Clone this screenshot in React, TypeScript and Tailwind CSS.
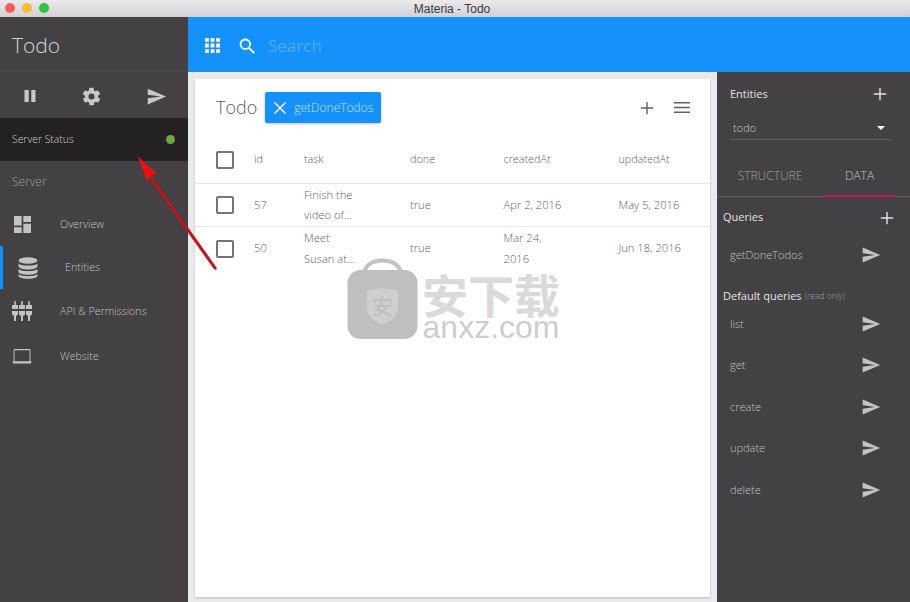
import React from "react";

const Send = ({ className = "" }: { className?: string }) => (
  <svg viewBox="0 0 24 24" className={className} fill="currentColor">
    <path d="M2 3 L23 12 L2 21 L2 14 L17 12 L2 10 Z" />
  </svg>
);

const Plus = ({ className = "" }: { className?: string }) => (
  <svg viewBox="0 0 16 16" className={className} fill="none" stroke="currentColor" strokeWidth="1.6">
    <path d="M8 1V15M1 8H15" />
  </svg>
);

const Box = () => <div className="h-[18px] w-[18px] rounded-[2px] border-2 border-[#757575]" />;

const NavItem = ({ icon, label, h, active }: { icon: React.ReactNode; label: string; h: string; active?: boolean }) => (
  <div className={`flex items-center ${h} ${active ? "border-l-[3px] border-[#1591fc]" : ""}`}>
    <div className={active ? "flex w-[50px] justify-center" : "flex w-[44px] justify-center"}>{icon}</div>
    <span className={`text-[10.7px] font-light text-[#c4c3c4] ${active ? "pl-[12px]" : "pl-[16px]"}`}>{label}</span>
  </div>
);

const Query = ({ label, h }: { label: string; h: string }) => (
  <div className={`flex items-center justify-between pl-[13px] pr-[26px] ${h}`}>
    <span className="text-[11px] font-light text-[#c4c3c4]">{label}</span>
    <Send className="mr-[3px] h-[20px] w-[20px] text-[#c4c3c4]" />
  </div>
);

export default function App() {
  return (
    <div className="relative flex h-[602px] w-[910px] flex-col overflow-hidden bg-[#e8eaed] font-['Open_Sans','Noto_Sans',sans-serif]">
      {/* title bar */}
      <div className="relative flex h-[17px] shrink-0 items-center justify-center bg-gradient-to-b from-[#ebe9eb] to-[#d3d1d3] text-[12px] text-[#3c3c3c] font-['Liberation_Sans',sans-serif]">
        <div className="absolute left-[5px] top-[3px] flex gap-[7px]">
          <span className="h-[10px] w-[10px] rounded-full bg-[#fc5c56]" />
          <span className="h-[10px] w-[10px] rounded-full bg-[#fdbc2e]" />
          <span className="h-[10px] w-[10px] rounded-full bg-[#29c740]" />
        </div>
        <span className="pr-[6px]">Materia - Todo</span>
      </div>

      <div className="flex min-h-0 flex-1">
        {/* sidebar */}
        <aside className="flex w-[188px] shrink-0 flex-col bg-[#434143]">
          <div className="flex h-[55px] items-center border-b border-[#4d4b4d] pl-[12px] pt-[3px] text-[21px] font-light text-[#d6d5d6]">Todo</div>
          <div className="flex h-[46px] items-center justify-between pl-[23px] pr-[21px] pt-[2px] text-[#c9c8c9]">
            <svg viewBox="0 0 14 14" className="h-[14px] w-[14px]" fill="currentColor"><path d="M1.500 1h4.200v12H1.500zM8.300 1h4.200v12H8.300z" /></svg>
            <svg viewBox="0 0 24 24" className="h-[21px] w-[21px]" fill="currentColor"><path d="M19.4 13a7.5 7.5 0 0 0 0-2l2.1-1.6a.5.5 0 0 0 .1-.7l-2-3.4a.5.5 0 0 0-.6-.2l-2.5 1a7.4 7.4 0 0 0-1.7-1l-.4-2.7a.5.5 0 0 0-.5-.4h-4a.5.5 0 0 0-.5.4l-.4 2.7a7.4 7.4 0 0 0-1.7 1l-2.5-1a.5.5 0 0 0-.6.2l-2 3.4a.5.5 0 0 0 .1.7L4.6 11a7.5 7.5 0 0 0 0 2l-2.1 1.6a.5.5 0 0 0-.1.7l2 3.4c.1.2.4.3.6.2l2.5-1a7.4 7.4 0 0 0 1.7 1l.4 2.7c0 .2.3.4.5.4h4c.2 0 .5-.2.5-.4l.4-2.7a7.4 7.4 0 0 0 1.7-1l2.5 1c.2.1.5 0 .6-.2l2-3.4a.5.5 0 0 0-.1-.7zM12 15.5a3.5 3.5 0 1 1 0-7 3.5 3.5 0 0 1 0 7z" /></svg>
            <Send className="h-[21px] w-[21px]" />
          </div>
          <div className="flex h-[43px] items-center justify-between bg-[#232123] pl-[12px] pr-[13px] text-[10.4px] font-light text-[#d0cfd0]">
            <span>Server Status</span>
            <span className="h-[9px] w-[9px] rounded-full bg-[#71a83c]" />
          </div>
          <div className="flex h-[42px] items-center pl-[12px] text-[12px] font-light text-[#a09fa0]">Server</div>
          <div className="flex flex-col">
            <NavItem
              h="h-[43px]"
              label="Overview"
              icon={<svg viewBox="0 0 16 16" className="h-[17px] w-[17px] text-[#c4c3c4]" fill="currentColor"><path d="M0 0h7.2v9H0zM8.8 0H16v5.6H8.8zM0 10.6h7.2V16H0zM8.8 7.2H16V16H8.8z" /></svg>}
            />
            <NavItem
              h="h-[43px]"
              active
              label="Entities"
              icon={<svg viewBox="0 0 20 22" className="h-[22px] w-[20px] text-[#c4c3c4]" fill="currentColor"><ellipse cx="10" cy="3.5" rx="9.5" ry="3.3" /><path d="M.5 6v3.2C.5 11 4.8 12.4 10 12.4S19.5 11 19.5 9.2V6C19.5 7.8 15.2 8.6 10 8.6S.5 7.8.5 6z" /><path d="M.5 11.6v3.2c0 1.8 4.3 3 9.5 3s9.5-1.2 9.5-3v-3.2c0 1.8-4.3 2.6-9.5 2.6S.5 13.4.5 11.6z" /><path d="M.5 16.6v2.2c0 1.8 4.3 3 9.5 3s9.5-1.2 9.5-3v-2.2c0 1.8-4.3 2.6-9.5 2.6S.5 18.4.5 16.6z" /></svg>}
            />
            <NavItem
              h="h-[44px]"
              label="API & Permissions"
              icon={<svg viewBox="0 0 20 20" className="h-[20px] w-[20px] text-[#c4c3c4]" fill="currentColor"><path d="M2.2 0h1.6v4H6v4H0V4h2.2zM9.2 0h1.6v4H13v4H7V4h2.2zM16.2 0h1.6v4H20v4h-6V4h2.2zM0 10h6v3.5L4 15v5H2v-5L0 13.5zM7 10h6v3.5L11 15v5H9v-5l-2-1.5zM14 10h6v3.5L18 15v5h-2v-5l-2-1.5z" /></svg>}
            />
            <NavItem
              h="h-[46px]"
              label="Website"
              icon={<svg viewBox="0 0 20 16" className="h-[15px] w-[20px] text-[#c4c3c4]" fill="currentColor"><path fillRule="evenodd" d="M2 0h16a1 1 0 0 1 1 1v12h-1V1.2H2V13H1V1a1 1 0 0 1 1-1zM0 13h20v1a1.5 1.5 0 0 1-1.5 1.5h-17A1.5 1.5 0 0 1 0 14z" /></svg>}
            />
          </div>
        </aside>

        <div className="flex min-w-0 flex-1 flex-col">
          {/* blue bar */}
          <div className="flex h-[55px] shrink-0 items-center bg-[#1591fc] pl-[17px] pt-[2px]">
            <svg viewBox="0 0 15 15" className="h-[15px] w-[15px] text-white" fill="currentColor"><path d="M0 0h3.8v3.8H0zM5.6 0h3.8v3.8H5.6zM11.2 0H15v3.8h-3.8zM0 5.6h3.8v3.8H0zM5.6 5.6h3.8v3.8H5.6zM11.2 5.6H15v3.8h-3.8zM0 11.2h3.8V15H0zM5.6 11.2h3.8V15H5.6zM11.2 11.2H15V15h-3.8z" /></svg>
            <svg viewBox="0 0 16 16" className="ml-[19px] h-[16px] w-[16px] text-white" fill="none" stroke="currentColor" strokeWidth="1.8"><circle cx="6.3" cy="6.3" r="4.8" /><path d="M10 10L15.2 15.2" /></svg>
            <div className="ml-[12px] mt-[1px] flex h-[25px] flex-1 items-center border-b border-[#2b8fe6] pl-[1px] text-[17px] text-[#4fabfb]">Search</div>
          </div>

          <div className="flex min-h-0 flex-1">
            {/* content */}
            <main className="min-w-0 flex-1 pl-[7px] pr-[7px] pt-[7px] pb-[5px]">
              <div className="flex h-full flex-col bg-white shadow-[0_1px_2px_rgba(0,0,0,0.2)]">
                <div className="flex h-[57px] shrink-0 items-center pl-[21px] pr-[20px]">
                  <span className="text-[18px] font-light text-[#5a5a5a]">Todo</span>
                  <div className="ml-[8px] flex h-[31px] w-[116px] items-center rounded-[2px] bg-[#1591fc] pl-[9px] shadow-[0_1px_3px_rgba(0,0,0,0.25)]">
                    <svg viewBox="0 0 12 12" className="h-[12px] w-[12px] text-white" fill="none" stroke="currentColor" strokeWidth="1.5"><path d="M.5.5l11 11M11.5.5l-11 11" /></svg>
                    <span className="ml-[8px] text-[12px] font-light text-[#c4e3fd]">getDoneTodos</span>
                  </div>
                  <div className="ml-auto flex items-center gap-[20px] text-[#616161]">
                    <Plus className="h-[14px] w-[14px]" />
                    <svg viewBox="0 0 16 11" className="h-[11px] w-[16px]" fill="currentColor"><path d="M0 0h16v1.5H0zM0 4.75h16v1.5H0zM0 9.5h16V11H0z" /></svg>
                  </div>
                </div>
                <div className="grid grid-cols-[59px_50px_106px_93.5px_115px_1fr] font-light text-[#5f5f5f]">
                  <Row cells={["id", "task", "done", "createdAt", "updatedAt"]} h="h-[48px]" size="text-[10.8px]" />
                  <Row cells={["57", ["Finish the", "video of..."], "true", "Apr 2, 2016", "May 5, 2016"]} h="h-[43px]" size="text-[11.2px]" />
                  <Row cells={["50", ["Meet", "Susan at..."], "true", ["Mar 24,", "2016"], "Jun 18, 2016"]} h="h-[43px]" size="text-[11.2px]" last />
                </div>
              </div>
            </main>

            {/* right panel */}
            <aside className="flex w-[193px] shrink-0 flex-col bg-[#434143]">
              <div className="flex h-[43px] items-center justify-between pl-[13px] pr-[23px] pt-[1px]">
                <span className="text-[11px] text-[#e4e3e4]">Entities</span>
                <Plus className="h-[14px] w-[14px] text-[#e4e3e4]" />
              </div>
              <div className="ml-[14px] mr-[18px] mt-[2px] flex h-[23px] items-center justify-between border-b border-[#5e5c5e] pl-[2px] pr-[7px] text-[11px] font-light text-[#cfcecf]">
                <span>todo</span>
                <span className="h-0 w-0 border-x-[4px] border-t-[4px] border-x-transparent border-t-white" />
              </div>
              <div className="mt-[18px] flex h-[39px] border-b border-[#5e5c5e]">
                <div className="flex w-[107px] justify-center pt-[9px] pr-[1px] text-[12px] font-light text-[#a09fa0]">STRUCTURE</div>
                <div className="relative flex w-[71px] justify-center pt-[9px] text-[12px] font-light text-[#c4c3c4]">
                  DATA
                  <div className="absolute bottom-[-1px] left-0 right-0 h-[2px] bg-[#c2185b]" />
                </div>
              </div>
              <div className="flex h-[41px] items-center justify-between pl-[6px] pr-[16px]">
                <span className="text-[11px] text-[#e4e3e4]">Queries</span>
                <Plus className="h-[14px] w-[14px] text-[#e4e3e4]" />
              </div>
              <Query label="getDoneTodos" h="h-[34px]" />
              <div className="mt-[13px] flex h-[22px] items-center pl-[6px] text-[11px] text-[#e4e3e4]">
                Default queries<span className="ml-[3px] text-[8.5px] font-light text-[#a09fa0]">(read only)</span>
              </div>
              <div className="mt-[-4px] flex flex-col">
                <Query label="list" h="h-[41.5px]" />
                <Query label="get" h="h-[41.5px]" />
                <Query label="create" h="h-[41.5px]" />
                <Query label="update" h="h-[41.5px]" />
                <Query label="delete" h="h-[41.5px]" />
              </div>
            </aside>
          </div>
        </div>
      </div>

      {/* watermark */}
      <div className="pointer-events-none absolute left-[347px] top-[258px] flex items-start">
        <div className="relative h-[82px] w-[71px]">
          <svg viewBox="0 0 71 82" className="h-[82px] w-[71px]">
            <path d="M17 14C20 5 28 2.5 35.5 2.5S51 5 54 14" fill="none" stroke="#c4c4c4" strokeWidth="4" />
            <rect x="0.5" y="12" width="70" height="69" rx="13" fill="#bfbfbf" />
            <path d="M20 33q15-5 31 0v17q0 11-15.500 16q-15.500-5-15.500-16z" fill="#cfcfcf" />
          </svg>
          <span className="absolute left-[25px] top-[34px] text-[21px] leading-[26px] text-[#bcbcbc] font-['Noto_Sans_CJK_SC',sans-serif]">安</span>
        </div>
        <div className="ml-[4px] flex flex-col items-center pt-[15px]">
          <span className="text-[46px] font-bold leading-[40px] text-[#dadada] font-['Noto_Sans_CJK_SC',sans-serif]">安下载</span>
          <span className="mt-[1px] text-[32px] leading-[26px] text-[#cecece] font-['Liberation_Sans',sans-serif]">anxz.com</span>
        </div>
      </div>

      {/* annotation arrow */}
      <svg className="pointer-events-none absolute left-[130px] top-[150px]" width="100" height="125" viewBox="0 0 100 125">
        <path d="M85 118L21 28" stroke="rgba(0,0,0,0.25)" strokeWidth="3" strokeLinecap="round" transform="translate(1 1)" />
        <path d="M85 118L21 28" stroke="#cc1018" strokeWidth="3" strokeLinecap="round" />
        <path d="M7.500 6L27 24L20 26L17 31Z" fill="#f00d10" />
      </svg>
    </div>
  );
}

function Row({ cells, h, size, last }: { cells: (string | string[])[]; h: string; size: string; last?: boolean }) {
  const border = last ? "" : "border-b border-[#e6e6e6]";
  return (
    <>
      <div className={`flex items-center pl-[21px] ${h} ${border}`}><Box /></div>
      {cells.map((c, i) => (
        <div key={i} className={`flex flex-col justify-center ${size} ${h} ${border}`}>
          {Array.isArray(c) ? c.map((l) => <div key={l} className="leading-[20.5px]">{l}</div>) : c}
        </div>
      ))}
    </>
  );
}
